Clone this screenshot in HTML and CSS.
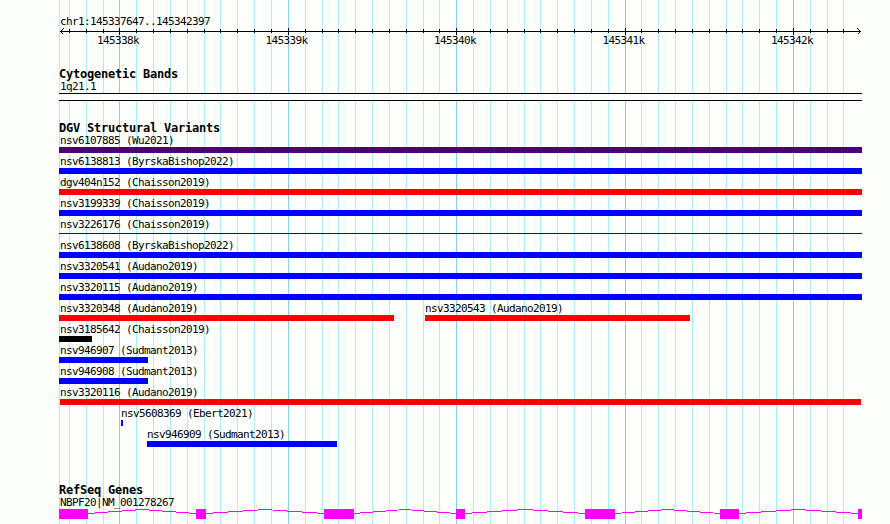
FILE: index.html
```html
<!DOCTYPE html>
<html lang="en">
<head>
<meta charset="utf-8">
<title>chr1:145337647..145342397</title>
<link rel="stylesheet" href="styles.css">
</head>
<body>
<svg class="grid" width="890" height="524" aria-hidden="true">
  <path class="minor" d="M59.500 0v524M69.500 0v524M86.500 0v524M103.500 0v524M136.500 0v524M153.500 0v524M170.500 0v524M187.500 0v524M204.500 0v524M220.500 0v524M237.500 0v524M254.500 0v524M271.500 0v524M305.500 0v524M322.500 0v524M338.500 0v524M355.500 0v524M372.500 0v524M389.500 0v524M406.500 0v524M423.500 0v524M439.500 0v524M473.500 0v524M490.500 0v524M507.500 0v524M524.500 0v524M540.500 0v524M557.500 0v524M574.500 0v524M591.500 0v524M608.500 0v524M641.500 0v524M658.500 0v524M675.500 0v524M692.500 0v524M709.500 0v524M726.500 0v524M742.500 0v524M759.500 0v524M776.500 0v524M810.500 0v524M827.500 0v524M843.500 0v524"/>
  <path class="major" d="M119.500 0v524M288.500 0v524M456.500 0v524M625.500 0v524M793.500 0v524"/>
</svg>
<main class="panel">
  <section class="ruler">
    <div class="label">chr1:145337647..145342397</div>
    <svg class="axis" width="803" height="7" aria-hidden="true">
      <path d="M1 3.500H802M10.500 1v4M27.500 1v4M44.500 1v4M60.500 0v7M77.500 1v4M94.500 1v4M111.500 1v4M128.500 1v4M145.500 1v4M161.500 1v4M178.500 1v4M195.500 1v4M212.500 1v4M229.500 0v7M246.500 1v4M263.500 1v4M279.500 1v4M296.500 1v4M313.500 1v4M330.500 1v4M347.500 1v4M364.500 1v4M380.500 1v4M397.500 0v7M414.500 1v4M431.500 1v4M448.500 1v4M465.500 1v4M481.500 1v4M498.500 1v4M515.500 1v4M532.500 1v4M549.500 1v4M566.500 0v7M582.500 1v4M599.500 1v4M616.500 1v4M633.500 1v4M650.500 1v4M667.500 1v4M683.500 1v4M700.500 1v4M717.500 1v4M734.500 0v7M751.500 1v4M768.500 1v4M784.500 1v4"/>
      <path class="arrow" d="M4.500 .5l-3 3l3 3M798.500 .5l3 3l-3 3"/>
    </svg>
    <div class="ticks"><span>145338k</span><span>145339k</span><span>145340k</span><span>145341k</span><span>145342k</span></div>
  </section>

  <section class="bands">
    <h2>Cytogenetic Bands</h2>
    <div class="label">1q21.1</div>
    <div class="band"></div>
  </section>

  <section class="variants">
    <h2>DGV Structural Variants</h2>
    <div class="row"><div class="feature indigo" style="width:803px"><div class="label">nsv6107885 (Wu2021)</div></div></div>
    <div class="row"><div class="feature blue" style="width:803px"><div class="label">nsv6138813 (ByrskaBishop2022)</div></div></div>
    <div class="row"><div class="feature red" style="width:803px"><div class="label">dgv404n152 (Chaisson2019)</div></div></div>
    <div class="row"><div class="feature blue" style="width:803px"><div class="label">nsv3199339 (Chaisson2019)</div></div></div>
    <div class="row"><div class="feature thin" style="width:803px"><div class="label">nsv3226176 (Chaisson2019)</div></div></div>
    <div class="row"><div class="feature blue" style="width:803px"><div class="label">nsv6138608 (ByrskaBishop2022)</div></div></div>
    <div class="row"><div class="feature blue" style="width:803px"><div class="label">nsv3320541 (Audano2019)</div></div></div>
    <div class="row"><div class="feature blue" style="width:803px"><div class="label">nsv3320115 (Audano2019)</div></div></div>
    <div class="row"><div class="feature red" style="width:335px"><div class="label">nsv3320348 (Audano2019)</div></div><div class="feature inner red" style="margin-left:31px;width:265px"><div class="label">nsv3320543 (Audano2019)</div></div></div>
    <div class="row"><div class="feature black" style="width:33px"><div class="label">nsv3185642 (Chaisson2019)</div></div></div>
    <div class="row"><div class="feature blue" style="width:89px"><div class="label">nsv946907 (Sudmant2013)</div></div></div>
    <div class="row"><div class="feature blue" style="width:89px"><div class="label">nsv946908 (Sudmant2013)</div></div></div>
    <div class="row"><div class="feature inner red" style="margin-left:1px;width:801px"><div class="label">nsv3320116 (Audano2019)</div></div></div>
    <div class="row"><div class="feature inner blue" style="margin-left:62px;width:2px"><div class="label">nsv5608369 (Ebert2021)</div></div></div>
    <div class="row"><div class="feature inner blue" style="margin-left:88px;width:190px"><div class="label">nsv946909 (Sudmant2013)</div></div></div>
  </section>

  <section class="genes">
    <h2>RefSeq Genes</h2>
    <div class="label">NBPF20|NM_001278267</div>
    <svg class="gene" width="803" height="10" aria-hidden="true">
      <path class="intron" d="M29 4.500L83 .5L137 4.500M147 4.500L206 .5L265 4.500M295 4.500L346 .5L397 4.500M406 4.500L466 .5L526 4.500M556 4.500L608.500 .5L661 4.500M680 4.500L739.500 .5L799 4.500"/>
      <path class="exon" d="M0 0h29v10h-29zM137 0h10v10h-10zM265 0h30v10h-30zM397 0h9v10h-9zM526 0h30v10h-30zM661 0h19v10h-19zM799 0h4v10h-4z"/>
    </svg>
  </section>
</main>
</body>
</html>
```
FILE: styles.css
```css
body {
  margin: 0;
  height: 524px;
  overflow: hidden;
  background: #fdfffc;
  color: #000;
  font: 11px/13px "DejaVu Sans Mono", monospace;
  letter-spacing: -0.622px;
}

svg {
  display: block;
  shape-rendering: crispEdges;
}

/* Coordinate grid lies behind all the tracks. */
.grid {
  position: absolute;
  top: 0;
  left: 0;
  z-index: -1;
}

.minor { stroke: #afeeee; }
.major { stroke: #87ceeb; }

.panel {
  width: 803px;
  margin-left: 59px;
  padding-top: 15px;
}

h2 {
  margin: 0 0 -1px;
  font-size: 12px;
  line-height: 14px;
  letter-spacing: -0.225px;
}

.label {
  height: 13px;
  padding-left: 1px;
  white-space: pre;
}

.ruler { height: 52px; }

.axis path {
  fill: none;
  stroke: #000;
}

.ticks {
  display: flex;
  justify-content: space-between;
  width: 716px;
  margin: -1px 0 0 38px;
}

.ticks span { width: 42px; }

.bands { height: 54px; }

.band {
  box-sizing: border-box;
  height: 8px;
  border: solid #000;
  border-width: 1px 0;
  background: #fdfffc;
}

.variants { height: 362px; }

.row {
  display: flex;
  height: 21px;
}

.feature {
  box-sizing: border-box;
  height: 19px;
  border-bottom: 6px solid;
}

.feature .label { color: #000; }
.inner .label { padding-left: 0; }

.indigo { border-color: #4b0082; }
.blue { border-color: #00f; }
.red { border-color: #f00; }
.black { border-color: #000; }

.thin {
  height: 16px;
  border-bottom: 1px solid #00c;
}

.intron {
  fill: none;
  stroke: #f0f;
}

.exon { fill: #f0f; }
```
